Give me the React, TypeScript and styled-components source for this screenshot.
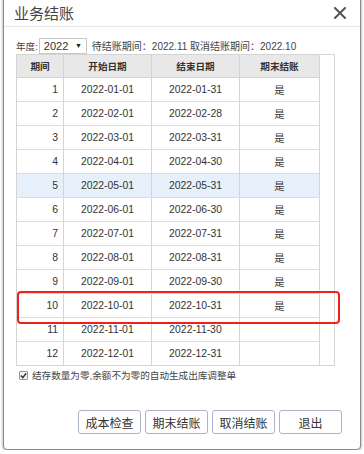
import styled, { createGlobalStyle } from 'styled-components'

const GlobalStyle = createGlobalStyle`
  html, body {
    margin: 0;
    padding: 0;
    background: #fff;
    overflow: hidden;
  }
  body {
    font-family: "Liberation Sans", "Noto Sans CJK SC", sans-serif;
    color: #333;
  }
`

const periods = [
  { no: 1, start: '2022-01-01', end: '2022-01-31', closed: true },
  { no: 2, start: '2022-02-01', end: '2022-02-28', closed: true },
  { no: 3, start: '2022-03-01', end: '2022-03-31', closed: true },
  { no: 4, start: '2022-04-01', end: '2022-04-30', closed: true },
  { no: 5, start: '2022-05-01', end: '2022-05-31', closed: true },
  { no: 6, start: '2022-06-01', end: '2022-06-30', closed: true },
  { no: 7, start: '2022-07-01', end: '2022-07-31', closed: true },
  { no: 8, start: '2022-08-01', end: '2022-08-31', closed: true },
  { no: 9, start: '2022-09-01', end: '2022-09-30', closed: true },
  { no: 10, start: '2022-10-01', end: '2022-10-31', closed: true },
  { no: 11, start: '2022-11-01', end: '2022-11-30', closed: false },
  { no: 12, start: '2022-12-01', end: '2022-12-31', closed: false },
]

function CloseIcon() {
  return (
    <svg width="12" height="12" viewBox="0 0 12 12">
      <path d="M1 1 L11 11 M11 1 L1 11" stroke="#555" strokeWidth="2" strokeLinecap="square" />
    </svg>
  )
}

function App() {
  return (
    <>
      <GlobalStyle />
      <Dialog>
        <Header>
          <Title>业务结账</Title>
          <CloseButton>
            <CloseIcon />
          </CloseButton>
        </Header>

        <Body>
          <YearRow>
            <span>年度:</span>
            <YearSelect>
              <span>2022</span>
              <Arrow>▼</Arrow>
            </YearSelect>
            <PeriodInfo>待结账期间：2022.11 取消结账期间：2022.10</PeriodInfo>
          </YearRow>

          <TableWrap>
            <Grid>
              <HeadCell>期间</HeadCell>
              <HeadCell>开始日期</HeadCell>
              <HeadCell>结束日期</HeadCell>
              <HeadCell>期末结账</HeadCell>
              {periods.map((p, i) => {
                const last = i === periods.length - 1
                const active = p.no === 5
                return (
                  <Row key={p.no} $active={active} $last={last}>
                    <Cell $align="right">{p.no}</Cell>
                    <Cell>{p.start}</Cell>
                    <Cell>{p.end}</Cell>
                    <Cell>{p.closed ? '是' : ''}</Cell>
                  </Row>
                )
              })}
            </Grid>
            <Marker />
          </TableWrap>

          <CheckRow>
            <CheckBox>
              <svg width="7" height="7" viewBox="0 0 7 7">
                <path d="M0.8 3.6 L2.8 5.6 L6.2 1.2" stroke="#333" strokeWidth="1.4" fill="none" />
              </svg>
            </CheckBox>
            <span>结存数量为零,余额不为零的自动生成出库调整单</span>
          </CheckRow>

          <Buttons>
            <Button>成本检查</Button>
            <Button>期末结账</Button>
            <Button>取消结账</Button>
            <Button>退出</Button>
          </Buttons>
        </Body>
      </Dialog>
    </>
  )
}

export default App

const Dialog = styled.div`
  box-sizing: border-box;
  width: 358px;
  height: 454px;
  margin: -4px 0 0 3px;
  background: #fff;
  border: 1px solid #8a8a8a;
  border-radius: 4px;
  box-shadow: 0 0 3px rgba(0, 0, 0, 0.45);
  display: flex;
  flex-direction: column;
`

const Header = styled.div`
  height: 30px;
  box-sizing: border-box;
  padding: 2px 10px 0 10px;
  border-bottom: 1px solid #e6e6e6;
  display: flex;
  align-items: center;
  justify-content: space-between;
`

const Title = styled.div`
  font-size: 15px;
  color: #444;
`

const CloseButton = styled.div`
  display: flex;
  align-items: center;
  margin-right: 4px;
`

const Body = styled.div`
  padding: 10px 0 0 12px;
  display: flex;
  flex-direction: column;
`

const YearRow = styled.div`
  display: flex;
  align-items: center;
  height: 17px;
  font-size: 9.6px;
  color: #444;
`

const YearSelect = styled.div`
  box-sizing: border-box;
  width: 48px;
  height: 16px;
  margin-left: 1px;
  padding: 0 4px;
  border: 1px solid #c8c8c8;
  display: flex;
  align-items: center;
  justify-content: space-between;
  font-size: 11px;
  color: #333;
`

const Arrow = styled.span`
  font-size: 7px;
  color: #222;
`

const PeriodInfo = styled.span`
  margin-left: 5px;
  font-size: 10px;
`

const TableWrap = styled.div`
  position: relative;
  box-sizing: border-box;
  width: 319px;
  border: 1px solid #d4d4d4;
  display: flex;
`

const Grid = styled.div`
  display: grid;
  grid-template-columns: 47px 88px 88px 80px;
`

const HeadCell = styled.div`
  box-sizing: border-box;
  height: 23px;
  background: #e8e8e8;
  border-right: 1px solid #d4d4d4;
  border-bottom: 1px solid #d4d4d4;
  display: flex;
  align-items: center;
  justify-content: center;
  font-size: 9.6px;
  font-weight: bold;
  color: #333;
`

const Row = styled.div<{ $active?: boolean; $last?: boolean }>`
  display: contents;

  & > div {
    background: ${(p) => (p.$active ? '#e6f0fb' : '#fff')};
    border-bottom: ${(p) => (p.$last ? 'none' : '1px solid #dcdcdc')};
    height: ${(p) => (p.$last ? '23px' : '24px')};
  }
`

const Cell = styled.div<{ $align?: 'right' | 'center' }>`
  box-sizing: border-box;
  border-right: 1px solid #d4d4d4;
  display: flex;
  align-items: center;
  justify-content: ${(p) => (p.$align === 'right' ? 'flex-end' : 'center')};
  padding-right: ${(p) => (p.$align === 'right' ? '5px' : '0')};
  font-size: 10.4px;
  color: #333;
`

const Marker = styled.div`
  position: absolute;
  left: 0;
  top: 236px;
  width: 323px;
  height: 33px;
  box-sizing: border-box;
  border: 2px solid #f0201c;
  border-radius: 4px;
  pointer-events: none;
`

const CheckRow = styled.div`
  display: flex;
  align-items: center;
  margin: 2px 0 0 3px;
  font-size: 9.6px;
  color: #444;
`

const CheckBox = styled.span`
  box-sizing: border-box;
  width: 9px;
  height: 9px;
  margin-right: 4px;
  border: 1px solid #999;
  border-radius: 1px;
  background: #f4f4f4;
  display: flex;
  align-items: center;
  justify-content: center;
`

const Buttons = styled.div`
  display: flex;
  justify-content: flex-end;
  gap: 4px;
  margin-top: 28px;
  padding-right: 18px;
`

const Button = styled.div`
  box-sizing: border-box;
  width: 63px;
  height: 24px;
  border: 1px solid #aab4c6;
  border-radius: 3px;
  background: #fff;
  display: flex;
  align-items: center;
  justify-content: center;
  font-size: 12px;
  color: #333;
`
